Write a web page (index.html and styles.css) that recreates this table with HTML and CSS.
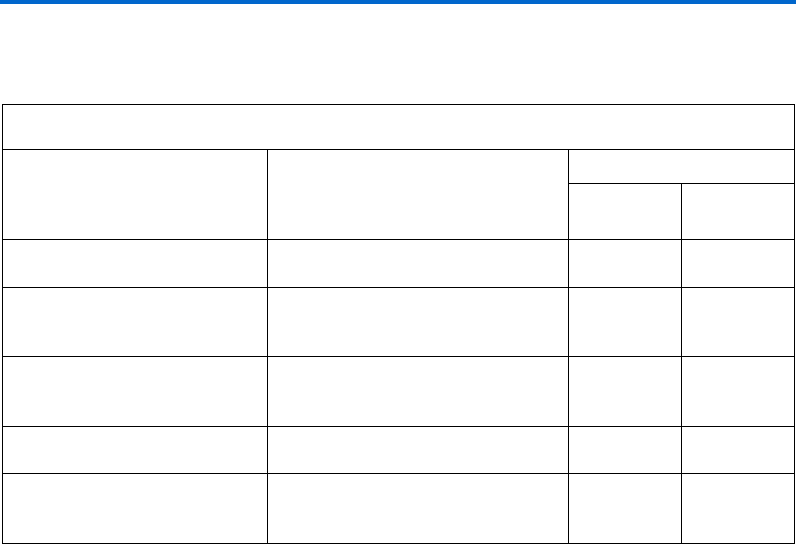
FILE: index.html
```html
<!DOCTYPE html>
<html lang="en">
<head>
<meta charset="utf-8">
<title>Table</title>
<link rel="stylesheet" href="styles.css">
</head>
<body>
<div class="topbar"></div>
<main class="content">
  <table class="grid">
    <colgroup>
      <col class="c1"><col class="c2"><col class="c3"><col class="c4">
    </colgroup>
    <thead>
      <tr class="r-title"><th colspan="4"></th></tr>
      <tr class="r-h1"><th rowspan="2"></th><th rowspan="2"></th><th colspan="2"></th></tr>
      <tr class="r-h2"><th></th><th></th></tr>
    </thead>
    <tbody>
      <tr class="r-a"><td></td><td></td><td></td><td></td></tr>
      <tr class="r-b"><td></td><td></td><td></td><td></td></tr>
      <tr class="r-c"><td></td><td></td><td></td><td></td></tr>
      <tr class="r-d"><td></td><td></td><td></td><td></td></tr>
      <tr class="r-e"><td></td><td></td><td></td><td></td></tr>
    </tbody>
  </table>
</main>
</body>
</html>
```

FILE: styles.css
```css
html, body {
  margin: 0;
  padding: 0;
  background: #ffffff;
  font-family: "Liberation Sans", Arial, sans-serif;
  font-size: 13px;
}
.topbar {
  height: 4px;
  background: #0066cc;
}
.content {
  padding: 100px 0 0 2px;
}
.grid {
  border-collapse: collapse;
  table-layout: fixed;
  width: 793px;
}
.grid th, .grid td {
  border: 1px solid #000;
  padding: 0;
}
.c1 { width: 265px; }
.c2 { width: 301px; }
.c3 { width: 113px; }
.c4 { width: 113px; }
.r-title { height: 45px; }
.r-h1 { height: 34px; }
.r-h2 { height: 56px; }
.r-a { height: 48px; }
.r-b { height: 69px; }
.r-c { height: 70px; }
.r-d { height: 47px; }
.r-e { height: 70px; }
```
